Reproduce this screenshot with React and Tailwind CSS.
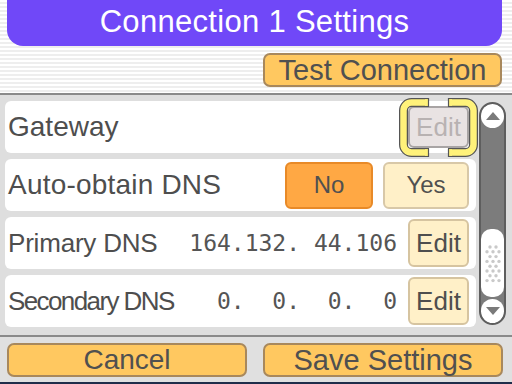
import React from "react";

function Btn({ className = "", children }) {
  return (
    <div className={"flex items-center justify-center leading-none " + className}>
      {children}
    </div>
  );
}

function Bracket() {
  return (
    <svg className="absolute left-[394px] top-[-3px] z-10" width="79" height="59" viewBox="0 0 79 59">
      <defs>
        <clipPath id="brk">
          <rect x="0" y="0" width="30" height="59" />
          <rect x="49" y="0" width="30" height="59" />
        </clipPath>
      </defs>
      <g clipPath="url(#brk)">
        <rect x="4.5" y="4.5" width="70" height="50" rx="8" fill="none" stroke="#555" strokeWidth="9" />
        <rect x="4.5" y="4.5" width="70" height="50" rx="8" fill="none" stroke="#fff27a" strokeWidth="6.5" />
      </g>
      <rect x="26" y="1.2" width="3.5" height="6.6" fill="#fff27a" />
      <rect x="49.5" y="1.2" width="3.5" height="6.6" fill="#fff27a" />
      <rect x="26" y="51.2" width="3.5" height="6.6" fill="#fff27a" />
      <rect x="49.5" y="51.2" width="3.5" height="6.6" fill="#fff27a" />
      <path d="M29.5 0 V8.5 M49.5 0 V8.5 M29.5 50.5 V59 M49.5 50.5 V59" stroke="#555" strokeWidth="1.2" />
    </svg>
  );
}

function Dots() {
  const dots = [];
  for (let r = 0; r < 8; r++) {
    const y = 4 + r * 4.8;
    const xs = r % 2 === 0 ? [8, 14] : [5, 11, 17];
    xs.forEach((x) => dots.push(<circle key={r + "-" + x} cx={x} cy={y} r="1.7" fill="#c9c9c9" />));
  }
  return (
    <svg width="22" height="40" viewBox="0 0 22 40">
      {dots}
    </svg>
  );
}

function Scrollbar() {
  return (
    <div className="ml-[3px] mt-[7px] w-[27px] h-[223px] rounded-full bg-[#7c7c7c] border-2 border-[#5e5e5e] flex flex-col overflow-hidden">
      <div className="h-[24px] w-full rounded-full bg-white flex items-center justify-center">
        <svg width="14" height="8" viewBox="0 0 14 8">
          <path d="M7 0 L14 8 H0 Z" fill="#7a7a7a" />
        </svg>
      </div>
      <div className="flex-1" />
      <div className="h-[68px] w-full rounded-[10px] bg-white flex items-center justify-center">
        <Dots />
      </div>
      <div className="h-[24px] mt-[2px] w-full rounded-full bg-white flex items-center justify-center">
        <svg width="14" height="8" viewBox="0 0 14 8">
          <path d="M0 0 H14 L7 8 Z" fill="#7a7a7a" />
        </svg>
      </div>
    </div>
  );
}

function Row({ children }) {
  return (
    <div className="relative h-[52px] w-[471px] bg-white rounded-[6px] flex items-center pl-[3px] pr-[7px] text-[#4e4e4e]">
      {children}
    </div>
  );
}

const editCls =
  "w-[61px] h-[48px] rounded-[6px] bg-[#fff0c8] border-2 border-[#d6c4a0] text-[26px] text-[#4e4e4e]";

export default function App() {
  return (
    <div className="w-[512px] h-[384px] overflow-hidden flex flex-col font-['Liberation_Sans',Arial,sans-serif]">
      <div className="h-[93px] flex flex-col bg-[repeating-linear-gradient(to_bottom,#ffffff_0px,#ffffff_2px,#eeeeee_2px,#eeeeee_4px)]">
        <div className="ml-[7px] w-[495px] h-[46px] bg-[#7048f8] rounded-b-[16px] flex items-center justify-center pb-[3px] text-white text-[31px] tracking-[0.3px] leading-none">
          Connection 1 Settings
        </div>
        <Btn className="self-end mr-[10px] mt-[7px] w-[239px] h-[34px] rounded-[7px] border-2 border-[#a8885c] bg-[#ffc860] text-[29px] text-[#505050]">
          Test Connection
        </Btn>
      </div>
      <div className="h-[2px] bg-[#8a8a8a]" />
      <div className="h-[240px] bg-[#dedede] flex">
        <div className="pl-[5px] pt-[6px] flex flex-col gap-[6px]">
          <Row>
            <span className="text-[28px] leading-none">Gateway</span>
            <Btn className="ml-auto w-[61px] h-[42px] rounded-[6px] bg-[#e9e3e3] border-2 border-[#a8a4a4] text-[26px] text-[#b8b2b2]">
              Edit
            </Btn>
            <Bracket />
          </Row>
          <Row>
            <span className="text-[28px] leading-none tracking-[0.2px]">Auto-obtain DNS</span>
            <Btn className="ml-auto w-[88px] h-[47px] rounded-[6px] bg-[#ffa844] border-2 border-[#e88a28] text-[24px] text-[#505050]">
              No
            </Btn>
            <Btn className="ml-[10px] w-[86px] h-[47px] rounded-[6px] bg-[#fff0c8] border-2 border-[#d8c8a8] text-[24px] text-[#505050]">
              Yes
            </Btn>
          </Row>
          <Row>
            <span className="text-[26px] leading-none tracking-[-0.2px]">Primary DNS</span>
            <span className="ml-auto whitespace-pre font-['DejaVu_Sans_Mono',monospace] text-[23px] leading-none text-[#555]">
              164.132. 44.106
            </span>
            <Btn className={"ml-[11px] " + editCls}>Edit</Btn>
          </Row>
          <Row>
            <span className="text-[26px] leading-none tracking-[-1.6px]">Secondary DNS</span>
            <span className="ml-auto whitespace-pre font-['DejaVu_Sans_Mono',monospace] text-[23px] leading-none text-[#555]">
              {"  0.  0.  0.  0"}
            </span>
            <Btn className={"ml-[11px] " + editCls}>Edit</Btn>
          </Row>
        </div>
        <Scrollbar />
      </div>
      <div className="h-[2px] bg-[#8a8a8a]" />
      <div className="h-[45px] bg-[#e0e0e0] flex gap-[16px] pl-[7px] pt-[6px]">
        <Btn className="w-[240px] h-[34px] rounded-[7px] border-2 border-[#a8885c] bg-[#ffc860] text-[28px] text-[#505050]">
          Cancel
        </Btn>
        <Btn className="w-[240px] h-[34px] rounded-[7px] border-2 border-[#a8885c] bg-[#ffc860] text-[29px] text-[#505050]">
          Save Settings
        </Btn>
      </div>
      <div className="h-[2px] bg-[#1f2d4a]" />
    </div>
  );
}
